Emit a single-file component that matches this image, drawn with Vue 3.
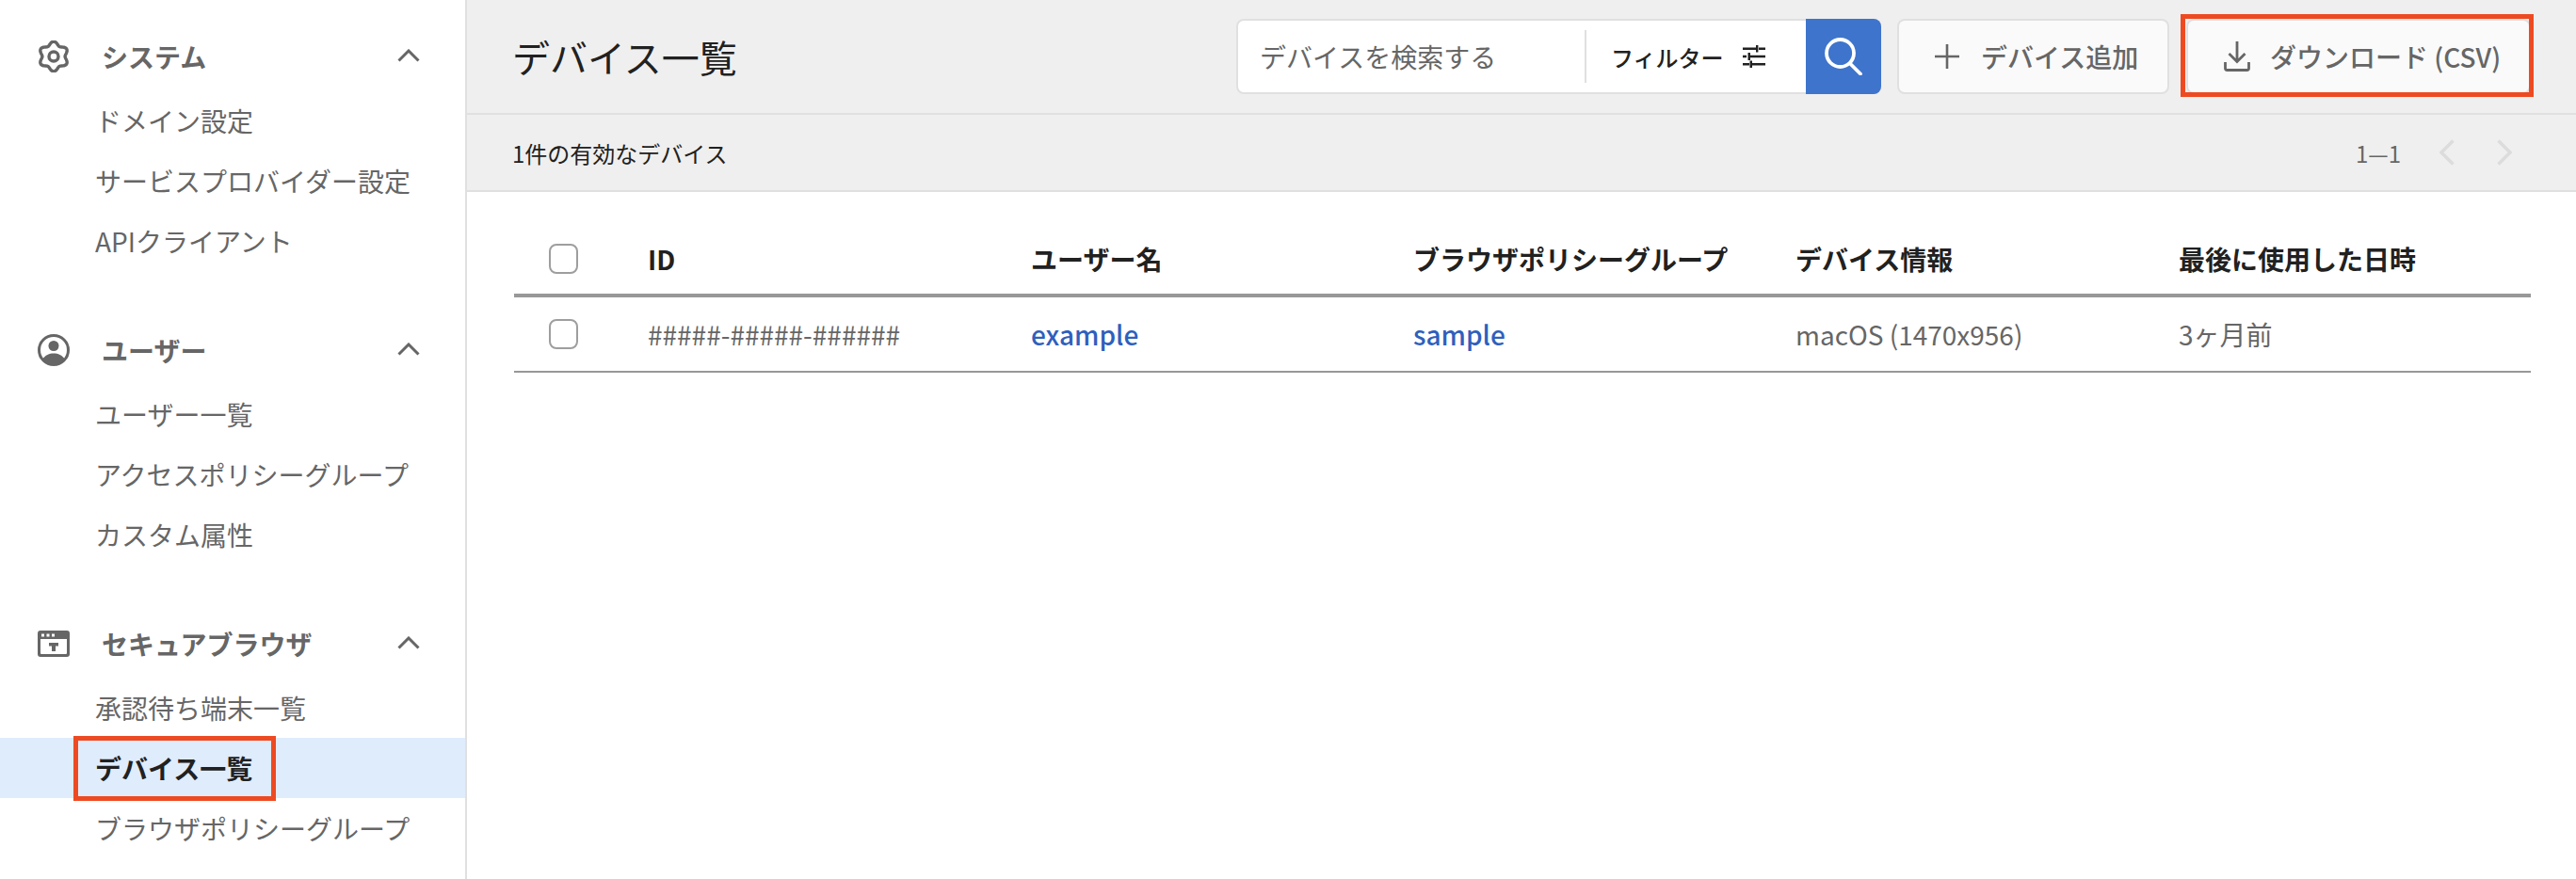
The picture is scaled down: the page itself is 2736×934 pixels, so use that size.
<script setup>
const gearPath = (() => {
  const pts = []
  const n = 120
  for (let i = 0; i < n; i++) {
    const t = (i / n) * Math.PI * 2
    const r = 14 + 1.9 * Math.cos(6 * t)
    const x = 17 + r * Math.sin(t)
    const y = 17 - r * Math.cos(t)
    pts.push(`${x.toFixed(2)} ${y.toFixed(2)}`)
  }
  return 'M' + pts.join('L') + 'Z'
})()

const sections = [
  { icon: 'gear', label: 'システム', items: ['ドメイン設定', 'サービスプロバイダー設定', 'APIクライアント'] },
  { icon: 'user', label: 'ユーザー', items: ['ユーザー一覧', 'アクセスポリシーグループ', 'カスタム属性'] },
  { icon: 'browser', label: 'セキュアブラウザ', items: ['承認待ち端末一覧', 'デバイス一覧', 'ブラウザポリシーグループ'], active: 'デバイス一覧' }
]
const columns = ['ID', 'ユーザー名', 'ブラウザポリシーグループ', 'デバイス情報', '最後に使用した日時']
</script>

<template>
  <div class="app">
    <aside class="sidebar">
      <section v-for="s in sections" :key="s.label" class="section">
        <div class="section-head">
          <svg v-if="s.icon === 'gear'" class="sec-icon" viewBox="0 0 34 34" fill="none" stroke="#666" stroke-width="3.400">
            <path :d="gearPath" stroke-linejoin="round" />
            <circle cx="17" cy="17" r="5" />
          </svg>
          <svg v-else-if="s.icon === 'user'" class="sec-icon" viewBox="0 0 34 34">
            <circle cx="17" cy="17" r="15.5" fill="#fff" stroke="#666" stroke-width="3" />
            <circle cx="17" cy="12.5" r="5.5" fill="#666" />
            <path d="M5 27c3-5 7.500-6.500 12-6.500s9 1.500 12 6.500c-3 3.500-7 5.500-12 5.500s-9-2-12-5.500z" fill="#666" />
          </svg>
          <svg v-else class="sec-icon browser" viewBox="0 0 34 28">
            <path fill-rule="evenodd" fill="#666" d="M3 0h28a3 3 0 0 1 3 3v22a3 3 0 0 1-3 3H3a3 3 0 0 1-3-3V3a3 3 0 0 1 3-3zM3 9v15a1 1 0 0 0 1 1h26a1 1 0 0 0 1-1V9z" />
            <rect x="4" y="3.500" width="3" height="3" fill="#fff" />
            <rect x="9.500" y="3.500" width="3" height="3" fill="#fff" />
            <rect x="15" y="3.500" width="3" height="3" fill="#fff" />
            <path fill="#666" d="M12 13h10v3.500h-3V22h-4v-5.500h-3z" />
          </svg>
          <span class="sec-label">{{ s.label }}</span>
          <svg class="chev" viewBox="0 0 24 14" fill="none" stroke="#666" stroke-width="3">
            <path d="M1.500 12.500 12 2l10.500 10.500" />
          </svg>
        </div>
        <ul class="items">
          <li v-for="it in s.items" :key="it" class="item" :class="{ active: it === s.active }">
            <span class="item-text">{{ it }}</span>
          </li>
        </ul>
      </section>
    </aside>

    <main class="main">
      <header class="topbar">
        <h1 class="title">デバイス一覧</h1>
        <div class="actions">
          <div class="search">
            <span class="placeholder">デバイスを検索する</span>
            <span class="filter">
              <span>フィルター</span>
              <svg class="tune" viewBox="0 0 24 24" fill="#212121">
                <path d="M0 2.500h14v2.400H0zM17 2.500h7v2.400h-7zM14 0h2.400v7.500H14zM0 10.800h4v2.400H0zM8 10.800h16v2.400H8zM5.500 8H8v8H5.500zM0 19h7v2.400H0zM10 19h14v2.400H10zM7.500 16.500H10V24H7.500z" />
              </svg>
            </span>
            <span class="search-btn">
              <svg viewBox="0 0 40 40" class="mag" fill="none" stroke="#fff" stroke-width="3.800" stroke-linecap="round">
                <circle cx="16.500" cy="16.500" r="14.500" />
                <path d="M27 27.500 38 38.500" />
              </svg>
            </span>
          </div>
          <button class="btn">
            <svg class="plus" viewBox="0 0 26 26" fill="#666"><path d="M11.700 0h2.600v26h-2.600zM0 11.700h26v2.600H0z" /></svg>
            <span>デバイス追加</span>
          </button>
          <button class="btn marked">
            <svg class="dl" viewBox="0 0 28 32" fill="none" stroke="#666" stroke-width="2.800">
              <path d="M14 0v21M5.500 13 14 21.500 22.500 13" />
              <path d="M1.500 22v6.500a2 2 0 0 0 2 2h21a2 2 0 0 0 2-2V22" />
            </svg>
            <span>ダウンロード (CSV)</span>
          </button>
        </div>
      </header>

      <div class="subbar">
        <span class="count">1件の有効なデバイス</span>
        <div class="pager">
          <span class="range">1—1</span>
          <svg class="pg" viewBox="0 0 16 28" fill="none" stroke="#dcdcdc" stroke-width="3.400"><path d="M14.500 1.500 2 14l12.500 12.500" /></svg>
          <svg class="pg" viewBox="0 0 16 28" fill="none" stroke="#dcdcdc" stroke-width="3.400"><path d="M1.500 1.500 14 14 1.500 26.500" /></svg>
        </div>
      </div>

      <div class="content">
        <div class="row head">
          <div class="cell check"><span class="box"></span></div>
          <div v-for="c in columns" :key="c" class="cell">{{ c }}</div>
        </div>
        <div class="row body">
          <div class="cell check"><span class="box"></span></div>
          <div class="cell">#####-#####-######</div>
          <div class="cell link">example</div>
          <div class="cell link">sample</div>
          <div class="cell">macOS (1470x956)</div>
          <div class="cell">3ヶ月前</div>
        </div>
      </div>
    </main>
  </div>
</template>

<style>
html, body { margin: 0; background: #fff; overflow: hidden; }
</style>

<style scoped>
.app {
  display: flex;
  width: 2736px;
  height: 934px;
  overflow: hidden;
  font-family: "Noto Sans CJK JP", "Noto Sans", sans-serif;
  color: #212121;
}
.sidebar {
  flex: none;
  box-sizing: border-box;
  width: 496px;
  height: 934px;
  border-right: 2px solid #e0e0e0;
  padding-top: 28px;
  display: flex;
  flex-direction: column;
  gap: 52px;
  background: #fff;
}
.section-head {
  display: flex;
  align-items: center;
  height: 64px;
  padding-left: 40px;
  color: #666;
  position: relative;
}
.sec-icon { width: 34px; height: 34px; flex: none; }
.sec-icon.browser { height: 28px; }
.sec-label {
  margin-left: 34px;
  font-size: 28px;
  font-weight: 700;
  line-height: 40px;
}
.chev {
  position: absolute;
  left: 422px;
  top: 24px;
  width: 24px;
  height: 14px;
}
.items {
  list-style: none;
  margin: 4px 0 0;
  padding: 0;
}
.item {
  height: 64px;
  display: flex;
  align-items: center;
  padding-left: 101px;
  font-size: 28px;
  color: #666;
  position: relative;
}
.item.active {
  background: #dfecfc;
  color: #212121;
  font-weight: 700;
}
.item.active::after {
  content: "";
  position: absolute;
  left: 78px;
  top: -2px;
  width: 215px;
  height: 69px;
  box-sizing: border-box;
  border: 5px solid #ee4a22;
}
.main {
  flex: 1;
  min-width: 0;
  display: flex;
  flex-direction: column;
}
.topbar {
  box-sizing: border-box;
  height: 122px;
  padding: 20px 48px 20px 48px;
  display: flex;
  align-items: center;
  justify-content: space-between;
  background: #efefef;
  border-bottom: 2px solid #e0e0e0;
}
.title {
  margin: 0;
  font-size: 40px;
  font-weight: 400;
  line-height: 56px;
}
.actions {
  display: flex;
  align-items: stretch;
  height: 80px;
}
.search {
  box-sizing: border-box;
  width: 685px;
  height: 80px;
  display: flex;
  align-items: center;
  background: #fff;
  border: 2px solid #e0e0e0;
  border-radius: 8px;
  position: relative;
}
.placeholder {
  width: 368px;
  flex: none;
  box-sizing: border-box;
  padding-left: 23px;
  font-size: 28px;
  color: #666;
  white-space: nowrap;
}
.filter {
  flex: none;
  box-sizing: border-box;
  width: 235px;
  height: 56px;
  border-left: 2px solid #e0e0e0;
  display: flex;
  align-items: center;
  padding-left: 26px;
  font-size: 24px;
  font-weight: 500;
  gap: 20px;
  white-space: nowrap;
}
.tune { width: 24px; height: 24px; flex: none; }
.search-btn {
  flex: none;
  width: 80px;
  height: 80px;
  margin: -2px -2px -2px auto;
  background: #3e74cc;
  border-radius: 0 8px 8px 0;
  display: flex;
  align-items: center;
  justify-content: center;
}
.mag { width: 40px; height: 40px; }
.btn {
  box-sizing: border-box;
  height: 80px;
  margin: 0;
  margin-left: 17px;
  display: flex;
  align-items: center;
  background: #fafafa;
  border: 2px solid #e0e0e0;
  border-radius: 8px;
  color: #666;
  font: 500 28px "Noto Sans CJK JP", "Noto Sans", sans-serif;
  white-space: nowrap;
  width: 289px;
  padding: 0 0 0 38px;
  gap: 23px;
  position: relative;
}
.btn.marked {
  width: 366px;
  margin-left: 18px;
  gap: 21px;
}
.btn.marked::after {
  content: "";
  position: absolute;
  left: -8px;
  right: -5px;
  top: -7px;
  bottom: -5px;
  border: 5px solid #ee4a22;
}
.plus { width: 26px; height: 26px; flex: none; }
.dl { width: 28px; height: 32px; flex: none; }
.subbar {
  box-sizing: border-box;
  height: 82px;
  padding: 0 68px 0 48px;
  display: flex;
  align-items: center;
  justify-content: space-between;
  background: #efefef;
  border-bottom: 2px solid #e0e0e0;
}
.count { font-size: 24px; }
.pager {
  display: flex;
  align-items: center;
}
.range { font-size: 24px; color: #666; margin-right: 41px; }
.pg { width: 16px; height: 28px; flex: none; }
.pg + .pg { margin-left: 45px; }
.content {
  flex: 1;
  padding: 34px 48px 0 50px;
  background: #fff;
}
.row {
  display: grid;
  grid-template-columns: 142px 407px 406px 406px 407px 1fr;
  align-items: center;
  font-size: 28px;
}
.row.head {
  height: 78px;
  box-sizing: border-box;
  border-bottom: 4px solid #989898;
  font-weight: 700;
}
.row.body {
  height: 80px;
  box-sizing: border-box;
  border-bottom: 2px solid #989898;
  color: #666;
}
.cell { white-space: nowrap; }
.cell.link { color: #2f5fbd; font-weight: 500; }
.check { padding-left: 37px; display: flex; }
.box {
  display: block;
  box-sizing: border-box;
  width: 31px;
  height: 32px;
  background: #fff;
  border: 2px solid #9e9e9e;
  border-radius: 8px;
}
</style>
